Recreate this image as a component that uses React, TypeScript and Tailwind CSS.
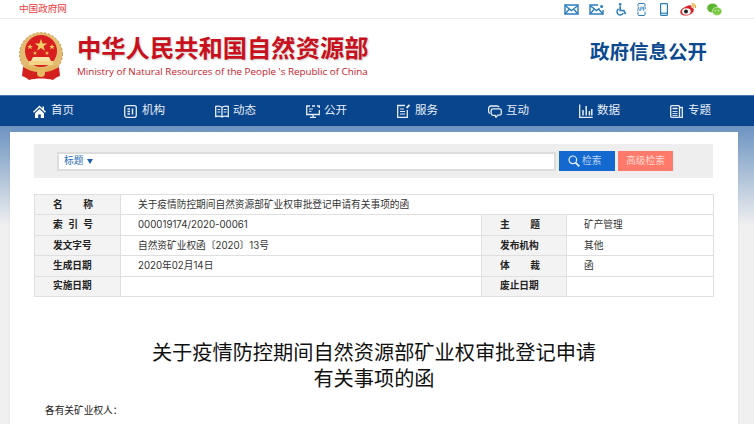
import { ReactNode } from 'react';

const CJK = "font-['Inter','Noto_Sans_CJK_SC',sans-serif]";

function Emblem() {
  return (
    <svg width="46" height="49" viewBox="0 0 46 49" className="mt-[-2px] shrink-0">
      <circle cx="23" cy="22" r="21.5" fill="#e3bb72" />
      <circle cx="23" cy="22" r="21.5" fill="none" stroke="#c99a4e" strokeWidth="1" strokeDasharray="2 2" />
      <circle cx="23" cy="19" r="16" fill="#d81e1e" />
      <path d="M23 7l1.6 4.4h4.6l-3.7 2.8 1.4 4.5-3.9-2.7-3.9 2.7 1.4-4.5-3.7-2.8h4.6z" fill="#f5cf63" />
      <path d="M12 12l.8 2h2l-1.6 1.3.6 2-1.800-1.200-1.800 1.200.6-2L9.200 14h2zM34 12l.8 2h2l-1.600 1.300.6 2-1.800-1.200-1.800 1.200.6-2L31.200 14h2zM17 19l.6 1.500h1.600l-1.300 1 .5 1.600-1.400-1-1.400 1 .5-1.600-1.300-1h1.600zM29 19l.6 1.500h1.600l-1.300 1 .5 1.600-1.400-1-1.400 1 .5-1.600-1.300-1h1.600z" fill="#f2c95c" />
      <path d="M15 25h16l2 4H13z" fill="#f7e3a8" />
      <rect x="11" y="29" width="24" height="4" fill="#f2d486" />
      <path d="M7 32c4 5 28 5 32 0l-1 5c-8 4-22 4-30 0z" fill="#e3b35c" />
      <path d="M5 35l6 3c7 3 17 3 24 0l6-3 1 9c-3 1-5 2-7 4-7-2-17-2-24 0-2-2-4-3-7-4z" fill="#d3201f" />
      <circle cx="23" cy="41" r="4" fill="#e6bb63" />
    </svg>
  );
}

function Envelope({ dot }: { dot?: boolean }) {
  return (
    <svg width="15" height="11" viewBox="0 0 15 11" fill="none" stroke="#2a7dbd" strokeWidth="1.4">
      <path d={dot ? 'M9 1H1v9h13V6' : 'M1 1h13v9H1z'} />
      <path d="M1 1.500l6.500 5 3-2.300M1 10l4.500-5M14 10L9.500 5" />
      {!dot && <path d="M14 1.500l-3.500 2.700" />}
      {dot && <circle cx="12.600" cy="2.600" r="1.500" fill="#2a7dbd" stroke="none" />}
    </svg>
  );
}

function Wheelchair() {
  return (
    <svg width="11" height="13" viewBox="0 0 11 13" fill="none" stroke="#2a7dbd" strokeWidth="1.5">
      <circle cx="4.200" cy="1.400" r="1.300" fill="#2a7dbd" stroke="none" />
      <path d="M4.200 3.200v4.300h3.600l1.800 3.600" strokeWidth="1.700" />
      <path d="M2.600 6a3.200 3.200 0 1 0 4.600 3.900" />
    </svg>
  );
}

function AppIcon() {
  return (
    <svg width="9" height="13" viewBox="0 0 9 13" fill="none">
      <rect x="1" y="0.500" width="7" height="12" rx="1" stroke="#2a7dbd" />
      <rect x="0" y="3.500" width="9" height="5" fill="#fff" />
      <path d="M.5 8l1-4 1 4M3.700 8V4h1.200a1 1 0 0 1 0 2H3.700M6.500 8V4h1.200a1 1 0 0 1 0 2H6.500" stroke="#2a7dbd" strokeWidth=".7" />
    </svg>
  );
}

function Phone() {
  return (
    <svg width="8" height="13" viewBox="0 0 8 13" fill="none" stroke="#2a7dbd" strokeWidth="1.2">
      <rect x=".6" y=".6" width="6.800" height="11.800" rx=".8" />
      <path d="M.6 10.200h6.800" />
    </svg>
  );
}

function Weibo() {
  return (
    <svg width="17" height="13" viewBox="0 0 17 13">
      <path d="M6.500 3.200C9 1.800 11 2 11.400 3.400c.2.700 0 1.200 0 1.200 1.800.3 2.600 1.300 2.400 2.700C13.400 10 10 12.600 6 12.600 3 12.600.3 11.200.3 8.700.3 6.800 3 4.700 6.500 3.200z" fill="#d8232a" />
      <ellipse cx="6.400" cy="8.500" rx="4.300" ry="3.200" fill="#fff" />
      <circle cx="6" cy="8.500" r="2" fill="#222" />
      <path d="M11.500.8c2.500-.4 4.600 1.700 4 4.300M11.800 2.700c1.200-.2 2.100.8 1.900 2" fill="none" stroke="#f39a1f" strokeWidth="1.100" />
    </svg>
  );
}

function Wechat() {
  return (
    <svg width="15" height="13" viewBox="0 0 15 13">
      <ellipse cx="5.500" cy="5" rx="5.300" ry="4.600" fill="#5cb531" />
      <ellipse cx="10" cy="8.300" rx="4.800" ry="4.100" fill="#7ac943" stroke="#fff" strokeWidth=".5" />
      <circle cx="8.300" cy="7.600" r=".6" fill="#fff" />
      <circle cx="11.500" cy="7.600" r=".6" fill="#fff" />
    </svg>
  );
}

const navStroke = { fill: 'none', stroke: '#e6edf6', strokeWidth: 1.300 };

const navItems: { label: string; icon: ReactNode }[] = [
  {
    label: '首页',
    icon: (
      <svg width="13" height="13" viewBox="0 0 13 13">
        <path d="M6.500.5L0 6.700l1 1 5.500-5.100L12 7.700l1-1-2-1.900V1.500H9.500v1.900z" fill="#fff" />
        <path d="M2 8.300l4.500-4.200L11 8.300V13H7.800V9.500H5.200V13H2z" fill="#fff" />
      </svg>
    ),
  },
  {
    label: '机构',
    icon: (
      <svg width="13" height="13" viewBox="0 0 13 13" {...navStroke}>
        <rect x=".7" y=".7" width="11.600" height="11.600" rx="2" />
        <path d="M3.500 4h2.500M3.500 6.500h2.500M3.500 9h2.500M8.500 3.500v6" strokeWidth="1.500" />
      </svg>
    ),
  },
  {
    label: '动态',
    icon: (
      <svg width="14" height="13" viewBox="0 0 14 13" {...navStroke}>
        <path d="M7 2.500C5.500 1 3 1 .7 1.500v10C3 11 5.500 11 7 12c1.500-1 4-1 6.300-.5v-10C11 1 8.500 1 7 2.500zM7 2.500V12" />
        <path d="M2.500 4.500h2.800M2.500 7h2.800M8.700 4.500h2.800M8.700 7h2.800" strokeWidth="1" />
      </svg>
    ),
  },
  {
    label: '公开',
    icon: (
      <svg width="14" height="13" viewBox="0 0 14 13" {...navStroke}>
        <path d="M4 1H.7v8.500h12.600V5M7 9.500V12M4 12.300h6" />
        <path d="M6 1h3M11 1h2.300v2" />
        <path d="M3 4h4M3 6.300h2.500" strokeWidth="1" />
      </svg>
    ),
  },
  {
    label: '服务',
    icon: (
      <svg width="13" height="14" viewBox="0 0 13 14" {...navStroke}>
        <path d="M8 1.500H.7v11.800h9.600V6" />
        <path d="M3 5h4M3 7.500h5M3 10h5" strokeWidth="1" />
        <path d="M9.500 4l3-3" strokeWidth="1.800" />
      </svg>
    ),
  },
  {
    label: '互动',
    icon: (
      <svg width="14" height="13" viewBox="0 0 14 13" {...navStroke}>
        <path d="M2 8.500C.9 8 .6 7 .6 6V3.500C.6 2 1.600 1 3 1h6c1 0 1.800.5 2.200 1.300" />
        <path d="M5 3.800h6.500c1 0 1.800.8 1.800 1.800v2.800c0 1-.8 1.800-1.800 1.800h-1.800L8 12.300l-.8-1.900H5c-1 0-1.800-.8-1.800-1.800V5.600c0-1 .8-1.800 1.800-1.800z" />
      </svg>
    ),
  },
  {
    label: '数据',
    icon: (
      <svg width="14" height="14" viewBox="0 0 14 14" {...navStroke}>
        <path d="M.7.500v12.800h13" />
        <path d="M4 11.500V6M7.200 11.500V2M10.400 11.500V7M12.800 11.500V5" strokeWidth="1.500" />
      </svg>
    ),
  },
  {
    label: '专题',
    icon: (
      <svg width="13" height="13" viewBox="0 0 13 13" {...navStroke}>
        <rect x=".7" y=".7" width="8.800" height="11.600" rx="1" />
        <path d="M9.500 2.500h2.800v9.800H9.500" />
        <path d="M2.500 3.500h5" strokeWidth="1.500" />
        <path d="M2.500 6.500h5M2.500 8.500h5M2.500 10.500h5" strokeWidth=".9" />
      </svg>
    ),
  },
];

const rows: [string, string, string?, string?][] = [
  ['名　称', '关于疫情防控期间自然资源部矿业权审批登记申请有关事项的函'],
  ['索 引 号', '000019174/2020-00061', '主　题', '矿产管理'],
  ['发文字号', '自然资矿业权函〔2020〕13号', '发布机构', '其他'],
  ['生成日期', '2020年02月14日', '体　裁', '函'],
  ['实施日期', '', '废止日期', ''],
];

function LabelCell({ text }: { text: string }) {
  const parts = text.split(/[　 ]/);
  return (
    <td className="border border-[#dfdfdf] bg-[#f3f3f3] px-[18px] font-bold text-[#222]">
      <div className="flex w-[40px] justify-between whitespace-nowrap">
        {parts.map((p) => (
          <span key={p}>{p}</span>
        ))}
      </div>
    </td>
  );
}

export default function App() {
  return (
    <div className={`h-[424px] w-[754px] overflow-hidden bg-white ${CJK}`}>
      {/* top bar */}
      <div className="flex h-[19px] items-center border-b border-[#ececec] pl-[19px] pr-[32px]">
        <a className="text-[9.600px] leading-none text-[#f03c3c]">中国政府网</a>
        <div className="ml-auto flex items-center">
          <Envelope />
          <div className="ml-[10px]">
            <Envelope dot />
          </div>
          <div className="ml-[12px]">
            <Wheelchair />
          </div>
          <div className="ml-[10px]">
            <AppIcon />
          </div>
          <div className="ml-[14px]">
            <Phone />
          </div>
          <div className="ml-[12px]">
            <Weibo />
          </div>
          <div className="ml-[10px]">
            <Wechat />
          </div>
        </div>
      </div>

      {/* header */}
      <div className="flex h-[76px] items-center pl-[18px] pr-[47px]">
        <Emblem />
        <div className="ml-[13px] mt-[-4px]">
          <div className="whitespace-nowrap text-[24.300px] font-bold leading-[30px] text-[#c8111c] [text-shadow:1px_1px_2px_rgba(0,0,0,0.2)]">
            中华人民共和国自然资源部
          </div>
          <div className="mt-[1px] whitespace-nowrap font-['Open_Sans',sans-serif] text-[9.850px] leading-[14px] text-[#c8202a]">
            Ministry of Natural Resources of the People 's Republic of China
          </div>
        </div>
        <div className="ml-auto mt-[-9px] text-[19.500px] font-bold text-[#0b4a8f]">政府信息公开</div>
      </div>

      {/* nav */}
      <nav className="flex h-[31px] items-center border-t border-[#4c79ae] bg-[#08458c] pl-[33px]">
        {navItems.map((item) => (
          <a key={item.label} className="flex w-[91px] shrink-0 items-center text-[#e8eef6]">
            <span className="flex w-[18px] shrink-0 items-center">{item.icon}</span>
            <span className="text-[11.500px] leading-none">{item.label}</span>
          </a>
        ))}
      </nav>

      {/* page body */}
      <div className="bg-[linear-gradient(#6c93c1,#f0f0f0_100px)] pb-[40px] pl-[10px] pr-[16px] pt-[6px]">
        <div className="bg-white px-[24px] pb-[40px] pt-[12px] shadow-[0_0_2px_rgba(0,0,0,0.08)]">
          <div className="flex h-[34px] w-[679px] items-center bg-[#eeeeee] pl-[23px]">
            <div className="flex h-[19px] w-[499px] items-center border-2 border-[#dddddd] bg-white pl-[5px] pt-[1px] text-[9.700px] text-[#2a6db5]">
              标题
              <svg width="6" height="5" viewBox="0 0 6 5" className="ml-[4px]">
                <path d="M0 0h6L3 5z" fill="#1f5fa8" />
              </svg>
            </div>
            <button className="ml-[3px] flex h-[20px] w-[56px] items-center bg-[#1469d1] pl-[9px] text-[9.700px] text-[#b9d2f0]">
              <svg width="12" height="12" viewBox="0 0 12 12" fill="none" stroke="#e6effa" className="mr-[2px]">
                <circle cx="4.800" cy="4.800" r="3.800" strokeWidth="1.200" />
                <path d="M7.600 7.600L11.300 11.300" strokeWidth="1.800" />
              </svg>
              检索
            </button>
            <button className="ml-[3px] h-[20px] w-[55px] bg-[#ff7a6a] text-[9.700px] text-[#ffd6d0]">高级检索</button>
          </div>

          <table className="mt-[16px] w-[679px] table-fixed border-collapse border border-[#dddddd] text-[9.700px] leading-none text-[#333]">
            <colgroup>
              <col className="w-[86px]" />
              <col className="w-[361px]" />
              <col className="w-[85px]" />
              <col className="w-[147px]" />
            </colgroup>
            <tbody>
              {rows.map(([l1, v1, l2, v2]) => (
                <tr key={l1} className="h-[20.400px]">
                  <LabelCell text={l1} />
                  <td colSpan={l2 ? 1 : 3} className="border border-[#dfdfdf] pl-[17px]">
                    {v1}
                  </td>
                  {l2 && (
                    <>
                      <LabelCell text={l2} />
                      <td className="border border-[#dfdfdf] pl-[17px]">{v2}</td>
                    </>
                  )}
                </tr>
              ))}
            </tbody>
          </table>

          <h1 className="mt-[43px] text-center text-[20.200px] font-normal leading-[26px] text-[#111]">
            关于疫情防控期间自然资源部矿业权审批登记申请
            <br />
            有关事项的函
          </h1>
          <p className="mt-[11px] pl-[11px] text-[9.700px] leading-[16px] text-[#222]">各有关矿业权人：</p>
        </div>
      </div>
    </div>
  );
}
